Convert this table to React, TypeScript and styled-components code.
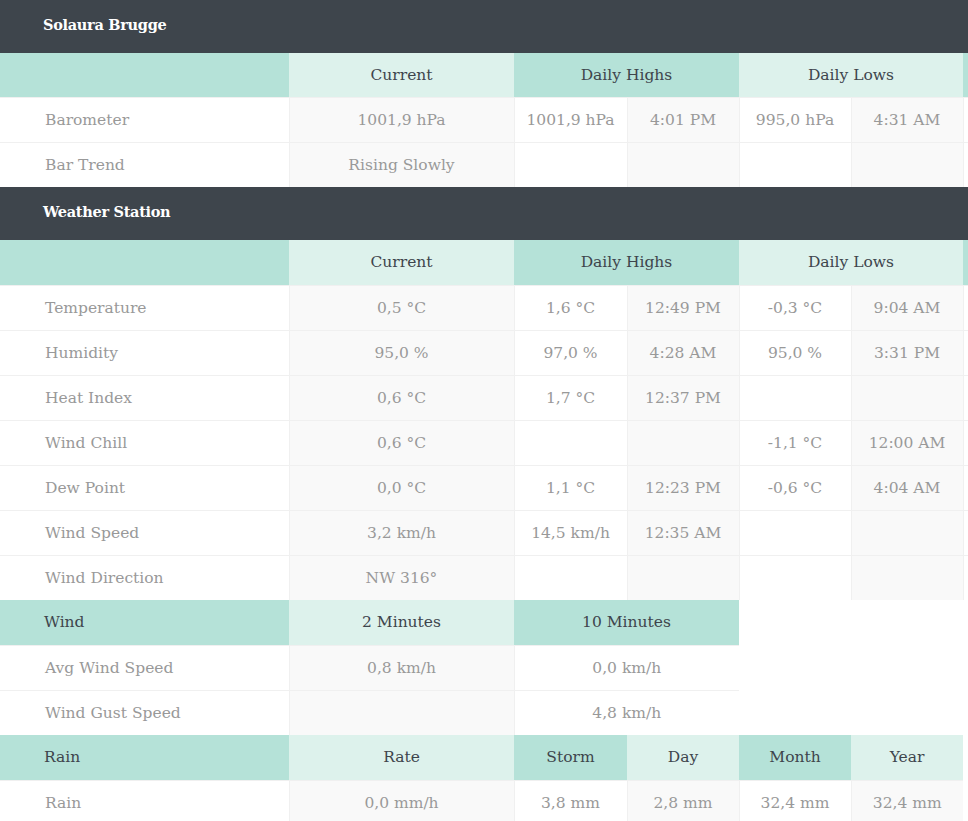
import React from "react";
import styled, { createGlobalStyle, css } from "styled-components";

const Global = createGlobalStyle`
  html, body { margin: 0; padding: 0; background: #ffffff; }
  body { font-family: "DejaVu Serif", "Liberation Serif", serif; }
`;

const Table = styled.table`
  width: 968px;
  border-collapse: collapse;
  table-layout: fixed;
  font-family: "DejaVu Serif", "Liberation Serif", serif;
  font-size: 15.5px;
`;

const TitleRow = styled.tr`
  height: 53px;
  background: #3e454c;
`;

const Title = styled.th`
  text-align: left;
  padding: 0 0 4px 43px;
  color: #ffffff;
  font-weight: bold;
  font-size: 14.5px;
  letter-spacing: -0.3px;
`;

const HeadRow = styled.tr<{ $first?: boolean }>`
  height: ${(p) => (p.$first ? "44px" : "45px")};
`;

const Head = styled.th<{ $left?: boolean; $dark?: boolean }>`
  padding: 0;
  font-weight: normal;
  color: #3e454c;
  text-align: ${(p) => (p.$left ? "left" : "center")};
  padding-left: ${(p) => (p.$left ? "44px" : "0")};
  background: ${(p) => (p.$dark ? "#b5e2d8" : "#ddf2ec")};
`;

const Row = styled.tr`
  height: 45px;
`;

const Cell = styled.td<{ $label?: boolean; $shade?: boolean }>`
  padding: 0;
  border-top: 1px solid #f0f0f0;
  color: #999999;
  text-align: center;
  background: ${(p) => (p.$shade ? "#f9f9f9" : "#ffffff")};
  ${(p) =>
    p.$label
      ? css`
          text-align: left;
          padding-left: 45px;
        `
      : css`
          border-left: 1px solid #f0f0f0;
        `}
`;

const Gap = styled.td`
  padding: 0;
  background: #ffffff;
`;

const Cols = () => (
  <colgroup>
    <col style={{ width: 289 }} />
    <col style={{ width: 225 }} />
    <col style={{ width: 113 }} />
    <col style={{ width: 112 }} />
    <col style={{ width: 112 }} />
    <col style={{ width: 112 }} />
    <col style={{ width: 5 }} />
  </colgroup>
);

type R = [string, string, string, string, string, string];

const station: R[] = [
  ["Temperature", "0,5 °C", "1,6 °C", "12:49 PM", "-0,3 °C", "9:04 AM"],
  ["Humidity", "95,0 %", "97,0 %", "4:28 AM", "95,0 %", "3:31 PM"],
  ["Heat Index", "0,6 °C", "1,7 °C", "12:37 PM", "", ""],
  ["Wind Chill", "0,6 °C", "", "", "-1,1 °C", "12:00 AM"],
  ["Dew Point", "0,0 °C", "1,1 °C", "12:23 PM", "-0,6 °C", "4:04 AM"],
  ["Wind Speed", "3,2 km/h", "14,5 km/h", "12:35 AM", "", ""],
  ["Wind Direction", "NW 316°", "", "", "", ""],
];

const baro: R[] = [
  ["Barometer", "1001,9 hPa", "1001,9 hPa", "4:01 PM", "995,0 hPa", "4:31 AM"],
  ["Bar Trend", "Rising Slowly", "", "", "", ""],
];

const SectionHead = ({ title, first }: { title: string; first?: boolean }) => (
  <>
    <TitleRow>
      <Title colSpan={7}>{title}</Title>
    </TitleRow>
    <HeadRow $first={first}>
      <Head $dark />
      <Head>Current</Head>
      <Head $dark colSpan={2}>Daily Highs</Head>
      <Head colSpan={2}>Daily Lows</Head>
      <Head $dark />
    </HeadRow>
  </>
);

const DataRow = ({ r }: { r: R }) => (
  <Row>
    <Cell $label>{r[0]}</Cell>
    <Cell $shade>{r[1]}</Cell>
    <Cell>{r[2]}</Cell>
    <Cell $shade>{r[3]}</Cell>
    <Cell>{r[4]}</Cell>
    <Cell $shade>{r[5]}</Cell>
    <Cell />
  </Row>
);

export default function App() {
  return (
    <>
      <Global />
      <Table>
        <Cols />
        <tbody>
          <SectionHead title="Solaura Brugge" first />
          {baro.map((r) => (
            <DataRow key={r[0]} r={r} />
          ))}
          <SectionHead title="Weather Station" />
          {station.map((r) => (
            <DataRow key={r[0]} r={r} />
          ))}
          <HeadRow>
            <Head $left $dark>Wind</Head>
            <Head>2 Minutes</Head>
            <Head $dark colSpan={2}>10 Minutes</Head>
            <Gap colSpan={3} />
          </HeadRow>
          <Row>
            <Cell $label>Avg Wind Speed</Cell>
            <Cell $shade>0,8 km/h</Cell>
            <Cell colSpan={2}>0,0 km/h</Cell>
            <Gap colSpan={3} />
          </Row>
          <Row>
            <Cell $label>Wind Gust Speed</Cell>
            <Cell $shade></Cell>
            <Cell colSpan={2}>4,8 km/h</Cell>
            <Gap colSpan={3} />
          </Row>
          <HeadRow>
            <Head $left $dark>Rain</Head>
            <Head>Rate</Head>
            <Head $dark>Storm</Head>
            <Head>Day</Head>
            <Head $dark>Month</Head>
            <Head>Year</Head>
            <Gap />
          </HeadRow>
          <Row>
            <Cell $label>Rain</Cell>
            <Cell $shade>0,0 mm/h</Cell>
            <Cell>3,8 mm</Cell>
            <Cell $shade>2,8 mm</Cell>
            <Cell>32,4 mm</Cell>
            <Cell $shade>32,4 mm</Cell>
            <Gap />
          </Row>
        </tbody>
      </Table>
    </>
  );
}
